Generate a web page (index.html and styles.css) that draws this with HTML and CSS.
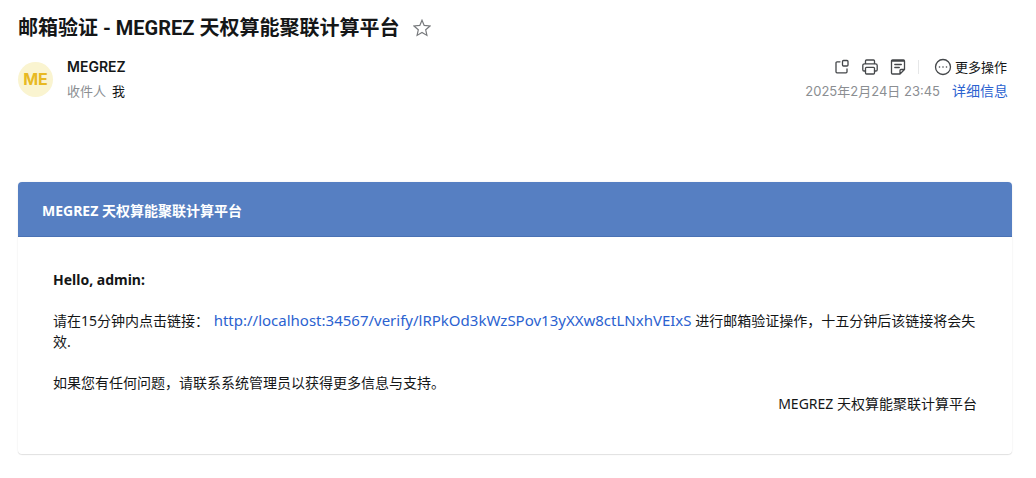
FILE: index.html
```html
<!DOCTYPE html>
<html lang="zh-CN">
<head>
<meta charset="utf-8">
<meta name="viewport" content="width=device-width, initial-scale=1">
<title>邮箱验证 - MEGREZ 天权算能聚联计算平台</title>
<link rel="stylesheet" href="styles.css">
</head>
<body>
<main class="mail">
  <div class="subject">
    <h1 class="subject-text">邮箱验证 - MEGREZ 天权算能聚联计算平台</h1>
    <button class="icon-button" type="button" aria-label="星标">
      <svg class="star" viewBox="0 0 18 18" width="18" height="18"><path d="M9 1.200l2.200 5.200 5.800.6-4.300 3.800 1.200 5.600L9 13.500l-4.900 2.900 1.200-5.600L1 7l5.800-.6z"/></svg>
    </button>
  </div>
  <header class="meta">
    <div class="avatar">ME</div>
    <div class="people">
      <div class="sender">MEGREZ</div>
      <div class="recipient"><span class="muted">收件人</span><span>我</span></div>
    </div>
    <div class="side">
      <div class="tools">
        <button class="icon-button" type="button" aria-label="新窗口打开">
          <svg viewBox="0 0 16 16" width="16" height="16"><path d="M6 2.800H3a1 1 0 0 0-1 1v9a1 1 0 0 0 1 1h9a1 1 0 0 0 1-1V10"/><rect x="8.500" y="1.500" width="5.500" height="5.500" rx="1"/></svg>
        </button>
        <button class="icon-button" type="button" aria-label="打印">
          <svg viewBox="0 0 16 16" width="16" height="16"><path d="M3.500 4.800V2a1 1 0 0 1 1-1h7a1 1 0 0 1 1 1v2.800M3.500 12H2a1.200 1.200 0 0 1-1.200-1.200V6.500A1.700 1.700 0 0 1 2.500 4.800h11a1.700 1.700 0 0 1 1.700 1.700v4.300A1.200 1.200 0 0 1 14 12h-1.500"/><rect x="3.500" y="8.300" width="9" height="6.700" rx="1"/></svg>
        </button>
        <button class="icon-button" type="button" aria-label="备注">
          <svg viewBox="0 0 16 16" width="16" height="16"><path d="M14.500 10.500V2a1 1 0 0 0-1-1h-11a1 1 0 0 0-1 1v12a1 1 0 0 0 1 1h7.500zM14.500 10.500H11a1 1 0 0 0-1 1V15M4.800 5.500h6.500M4.800 8.500h4.500M1.500 2h13"/></svg>
        </button>
        <span class="divider"></span>
        <button class="more" type="button">
          <svg viewBox="0 0 18 18" width="18" height="18"><circle cx="9" cy="9" r="7.500"/><path class="dots" d="M5.500 9h.01M9 9h.01M12.500 9h.01"/></svg>
          <span>更多操作</span>
        </button>
      </div>
      <div class="details">
        <time class="muted" datetime="2025-02-24T23:45">2025年2月24日 23:45</time>
        <a class="link" href="#details">详细信息</a>
      </div>
    </div>
  </header>
  <article class="card">
    <h2 class="card-title">MEGREZ 天权算能聚联计算平台</h2>
    <div class="card-body">
      <p class="greeting">Hello, admin:</p>
      <p class="text">请在15分钟内点击链接： <a class="link verify" href="http://localhost:34567/verify/lRPkOd3kWzSPov13yXXw8ctLNxhVEIxS">http://localhost:34567/verify/lRPkOd3kWzSPov13yXXw8ctLNxhVEIxS</a> 进行邮箱验证操作，十五分钟后该链接将会失效.</p>
      <div>
        <p class="text">如果您有任何问题，请联系系统管理员以获得更多信息与支持。</p>
        <p class="signature">MEGREZ 天权算能聚联计算平台</p>
      </div>
    </div>
  </article>
</main>
</body>
</html>
```
FILE: styles.css
```css
* {
  box-sizing: border-box;
}

body {
  margin: 0;
  background: #fff;
  color: #141617;
  font-family: Inter, "Noto Sans CJK SC", sans-serif;
  font-size: 13px;
  line-height: 20px;
}

h1, h2, p {
  margin: 0;
}

button {
  padding: 0;
  border: 0;
  background: none;
  color: inherit;
  font: inherit;
  cursor: pointer;
}

svg {
  display: block;
  fill: none;
  stroke: #44474a;
  stroke-width: 1.3;
  stroke-linecap: round;
  stroke-linejoin: round;
}

.mail {
  padding: 14px 24px 22px 18px;
}

.subject {
  display: flex;
  align-items: center;
  gap: 14px;
}

.subject-text {
  font-family: Roboto, "Noto Sans CJK SC", sans-serif;
  font-size: 20px;
  line-height: 28px;
  font-weight: 700;
}

.star {
  stroke: #77797c;
  stroke-width: 1.2;
  stroke-linejoin: miter;
}

.meta {
  display: flex;
  align-items: center;
  gap: 14px;
  margin: 15px 0 81px;
  padding-right: 4px;
}

.avatar {
  width: 35px;
  height: 35px;
  border-radius: 50%;
  background: #faf4d0;
  color: #e8b923;
  font-size: 16px;
  font-weight: 700;
  line-height: 35px;
  text-align: center;
}

.people {
  display: grid;
  gap: 4px;
}

.sender {
  font-size: 14px;
  font-weight: 600;
}

.recipient {
  display: flex;
  gap: 6px;
}

.muted {
  color: #8b8e92;
}

.side {
  display: grid;
  gap: 4px;
  margin-left: auto;
}

.tools {
  display: flex;
  align-items: center;
  justify-content: flex-end;
  gap: 12px;
}

.divider {
  width: 1px;
  height: 14px;
  margin-right: 3px;
  background: #e6e7e8;
}

.more {
  display: flex;
  align-items: center;
  gap: 3px;
  padding-right: 1px;
}

.dots {
  stroke-width: 1.6;
}

.details {
  display: flex;
  justify-content: flex-end;
  gap: 12px;
}

.details .link {
  font-size: 14px;
}

.link {
  color: #2b62d0;
  text-decoration: none;
}

.card {
  border-radius: 4px;
  box-shadow: 0 0 2px rgba(0, 0, 0, 0.08), 0 1px 1px rgba(0, 0, 0, 0.1);
  font-family: "Noto Sans", "Noto Sans CJK SC", sans-serif;
  font-size: 14px;
  line-height: 21px;
}

.card-title {
  padding: 18px 24px 15px;
  border-bottom: 1px solid #4a72b4;
  border-radius: 4px 4px 0 0;
  background: #567fc2;
  color: #fff;
  font-size: 14px;
  font-weight: 700;
  line-height: 21px;
}

.card-body {
  display: grid;
  gap: 20px;
  padding: 32px 35px 40px;
}

.greeting {
  font-weight: 700;
}

.verify {
  margin-left: 1px;
  font-size: 15px;
}

.signature {
  text-align: right;
}
```
